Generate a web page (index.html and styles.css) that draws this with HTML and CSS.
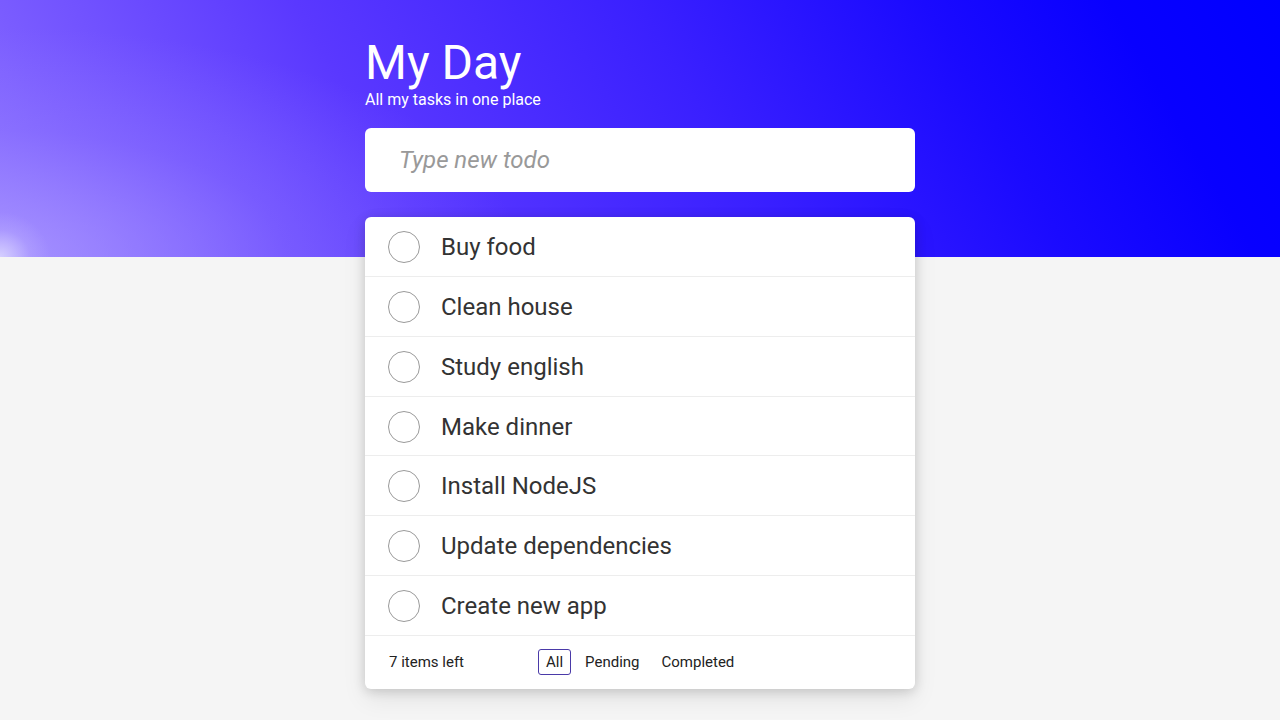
FILE: index.html
```html
<!DOCTYPE html>
<html lang="en">
<head>
<meta charset="utf-8">
<title>My Day</title>
<link rel="stylesheet" href="styles.css">
</head>
<body>
<div class="banner"></div>
<main class="app">
  <header class="head">
    <h1 class="title">My Day</h1>
    <p class="subtitle">All my tasks in one place</p>
  </header>
  <div class="new-todo"><input class="new-input" type="text" placeholder="Type new todo"></div>
  <section class="card">
    <ul class="list">
      <li class="item"><span class="check"></span><span class="label">Buy food</span></li>
      <li class="item"><span class="check"></span><span class="label">Clean house</span></li>
      <li class="item"><span class="check"></span><span class="label">Study english</span></li>
      <li class="item"><span class="check"></span><span class="label">Make dinner</span></li>
      <li class="item"><span class="check"></span><span class="label">Install NodeJS</span></li>
      <li class="item"><span class="check"></span><span class="label">Update dependencies</span></li>
      <li class="item"><span class="check"></span><span class="label">Create new app</span></li>
    </ul>
    <footer class="foot">
      <span class="count">7 items left</span>
      <nav class="filters">
        <a class="filter active">All</a>
        <a class="filter">Pending</a>
        <a class="filter">Completed</a>
      </nav>
    </footer>
  </section>
</main>
</body>
</html>
```
FILE: styles.css
```css
* { box-sizing: border-box; }
html, body { margin: 0; padding: 0; }
body {
  background: #f5f5f5;
  font-family: Roboto, "Noto Sans", sans-serif;
  color: #333;
  position: relative;
  min-height: 720px;
}
.banner {
  position: absolute;
  left: 0; top: 0; right: 0;
  height: 257px;
  background:
    radial-gradient(ellipse 50px 45px at 0% 100%, rgba(230,228,255,0.75) 0%, rgba(200,190,255,0.25) 60%, rgba(170,150,255,0) 100%),
    radial-gradient(ellipse 520px 230px at 0% 100%, rgba(185,170,255,0.6) 0%, rgba(160,140,255,0.25) 55%, rgba(150,125,255,0) 100%),
    linear-gradient(60deg, #8a70ff 0%, #7a5cff 10%, #5a38ff 31%, #3a20ff 55%, #1a0aff 75%, #0800ff 88%, #0000ff 100%);
}
.app {
  position: relative;
  width: 550px;
  margin: 0 auto;
  padding-top: 36px;
}
.head { color: #fff; }
.title {
  margin: 0;
  font-size: 48px;
  font-weight: 400;
  line-height: 54px;
}
.subtitle {
  margin: 1px 0 0;
  font-size: 16px;
  line-height: 18px;
}
.new-todo {
  margin-top: 19px;
  height: 64px;
  background: #fff;
  border-radius: 6px;
  display: flex;
  align-items: center;
  padding: 0 34px;
}
.new-input {
  border: 0;
  outline: 0;
  width: 100%;
  font-family: Roboto, sans-serif;
  font-size: 24px;
  color: #333;
  background: transparent;
  padding: 0;
}
.new-input::placeholder { color: #999; font-style: italic; }
.card {
  margin-top: 25px;
  background: #fff;
  border-radius: 6px;
  box-shadow: 0 2px 12px rgba(0,0,0,0.16), 0 10px 25px rgba(0,0,0,0.08);
}
.list { list-style: none; margin: 0; padding: 0; }
.item {
  height: 59.86px;
  display: flex;
  align-items: center;
  padding-left: 23px;
  padding-top: 1px;
  border-bottom: 1px solid #ededed;
}
.check {
  width: 32px; height: 32px;
  border: 1px solid #9a9a9a;
  border-radius: 50%;
  flex: none;
}
.label {
  margin-left: 21px;
  font-size: 24px;
  color: #333;
}
.foot {
  height: 53px;
  display: flex;
  align-items: center;
  padding-left: 24px;
  padding-bottom: 1px;
  font-size: 15px;
  color: #222;
}
.count { width: 149px; }
.filters { display: flex; gap: 5px; }
.filter {
  padding: 3px 7px;
  border: 1px solid transparent;
  border-radius: 3px;
  line-height: 18px;
  margin-right: 1px;
}
.filter.active { border-color: #4a3aa8; }
```
